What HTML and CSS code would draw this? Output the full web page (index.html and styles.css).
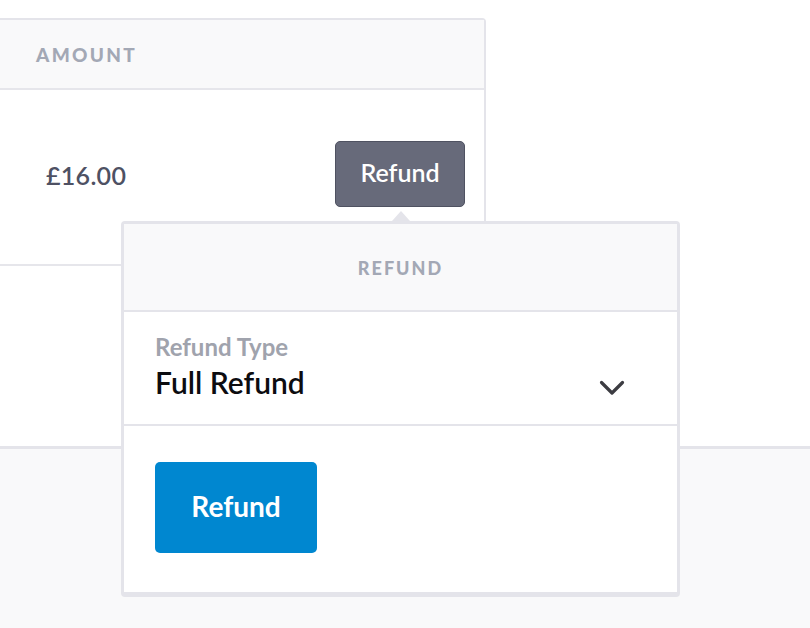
FILE: index.html
```html
<!DOCTYPE html>
<html lang="en">
<head>
<meta charset="utf-8">
<title>Refund</title>
<link rel="stylesheet" href="styles.css">
</head>
<body>
<div class="page">
  <div class="top">
    <div class="card">
      <div class="card-head"><span class="col-title">AMOUNT</span></div>
      <div class="card-row">
        <span class="amount">£16.00</span>
        <button class="btn-dark">Refund</button>
      </div>
    </div>
  </div>
  <div class="band"></div>

  <div class="popover">
    <div class="arrow"></div>
    <div class="pop-head">REFUND</div>
    <div class="pop-field">
      <div class="field-text">
        <span class="field-label">Refund Type</span>
        <span class="field-value">Full Refund</span>
      </div>
      <svg class="chev" width="26" height="16" viewBox="0 0 26 16"><polyline points="2.5,2.5 13,13 23.5,2.5" fill="none" stroke="#3c3c42" stroke-width="3.2" stroke-linecap="round" stroke-linejoin="round"/></svg>
    </div>
    <div class="pop-foot">
      <button class="btn-blue">Refund</button>
    </div>
  </div>
</div>
</body>
</html>
```

FILE: styles.css
```css
* { box-sizing: border-box; }
html, body {
  margin: 0;
  padding: 0;
  width: 810px;
  height: 628px;
  overflow: hidden;
  background: #ffffff;
  font-family: "Lato", "Noto Sans", sans-serif;
}
.page {
  position: relative;
  width: 810px;
  height: 628px;
  display: flex;
  flex-direction: column;
}
.top {
  height: 446px;
  padding-top: 18px;
}
.card {
  width: 488px;
  margin-left: -2px;
  border: 2px solid #e4e4ea;
  border-bottom: none;
  border-radius: 0 4px 0 0;
}
.card-head {
  height: 70px;
  background: #f9f9fa;
  border-bottom: 2px solid #e6e6eb;
  display: flex;
  align-items: center;
  padding-left: 36px;
}
.col-title {
  font-weight: 900;
  font-size: 19px;
  letter-spacing: 2.3px;
  color: #a3a8b5;
}
.card-row {
  height: 176px;
  border-bottom: 2px solid #e6e6eb;
  display: flex;
  align-items: center;
  justify-content: space-between;
  padding: 0 19px 6px 46px;
}
.amount {
  font-size: 25px;
  font-weight: 600;
  letter-spacing: 0.3px;
  color: #4e5163;
  margin-top: 2px;
}
.btn-dark {
  width: 130px;
  height: 66px;
  background: #676a7a;
  border: 1px solid #4f5261;
  border-radius: 5px;
  color: #ffffff;
  font-family: "Lato", sans-serif;
  font-size: 25px;
  font-weight: 600;
  padding: 0 0 4px;
}
.band {
  flex: 1;
  background: #f9f9fa;
  border-top: 3px solid #e4e4ea;
}
.popover {
  position: absolute;
  left: 121px;
  top: 221px;
  width: 559px;
  background: #ffffff;
  border: 3px solid #e4e4ea;
  border-bottom-width: 5px;
  border-radius: 4px;
}
.arrow {
  position: absolute;
  top: -13px;
  left: 268px;
  width: 0;
  height: 0;
  border-left: 9px solid transparent;
  border-right: 9px solid transparent;
  border-bottom: 10px solid #e4e4ea;
}
.pop-head {
  height: 88px;
  background: #f9f9fa;
  border-bottom: 2px solid #e4e4ea;
  display: flex;
  align-items: center;
  justify-content: center;
  font-weight: 900;
  font-size: 18px;
  letter-spacing: 2px;
  color: #a3a8b5;
  padding-top: 1px;
}
.pop-field {
  height: 114px;
  border-bottom: 2px solid #e4e4ea;
  display: flex;
  align-items: center;
  justify-content: space-between;
  padding: 0 52px 2px 31px;
}
.field-text {
  display: flex;
  flex-direction: column;
}
.field-label {
  font-size: 24px;
  font-weight: 700;
  color: #a0a3ad;
  line-height: 26px;
}
.field-value {
  font-size: 30px;
  font-weight: 600;
  color: #0c0c10;
  line-height: 38px;
  margin-top: 3px;
}
.chev {
  margin-top: 42px;
}
.pop-foot {
  height: 166px;
  padding: 36px 31px 0;
}
.btn-blue {
  width: 162px;
  height: 91px;
  background: #0087d0;
  border: none;
  border-radius: 5px;
  color: #ffffff;
  font-family: "Lato", sans-serif;
  font-size: 28px;
  font-weight: 700;
  padding: 0 0 4px;
}
```
